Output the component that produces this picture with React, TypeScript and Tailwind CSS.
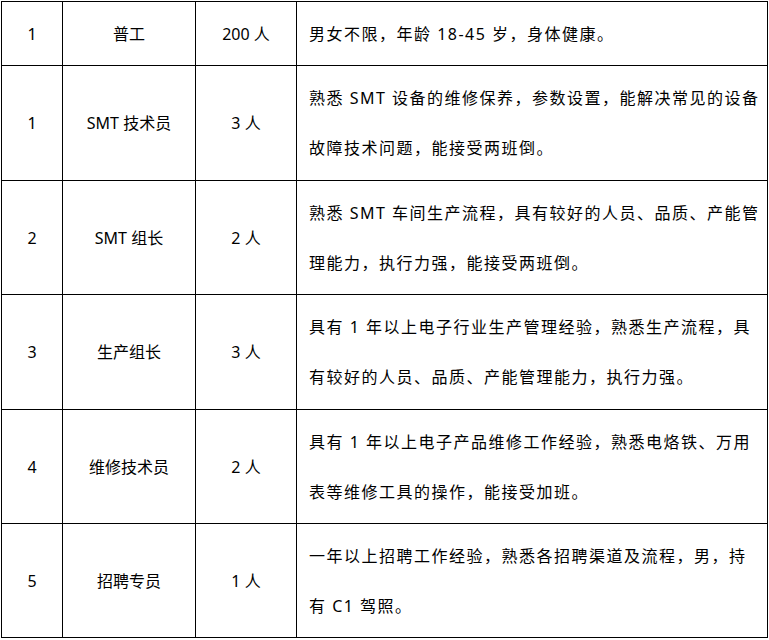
const rows = [
  { no: "1", title: "普工", count: "200 人", lines: ["男女不限，年龄 18-45 岁，身体健康。"], h: "h-[64px]" },
  {
    no: "1",
    title: "SMT 技术员",
    count: "3 人",
    lines: ["熟悉 SMT 设备的维修保养，参数设置，能解决常见的设备", "故障技术问题，能接受两班倒。"],
    h: "h-[115px]",
  },
  {
    no: "2",
    title: "SMT 组长",
    count: "2 人",
    lines: ["熟悉 SMT 车间生产流程，具有较好的人员、品质、产能管", "理能力，执行力强，能接受两班倒。"],
    h: "h-[114px]",
  },
  {
    no: "3",
    title: "生产组长",
    count: "3 人",
    lines: ["具有 1 年以上电子行业生产管理经验，熟悉生产流程，具", "有较好的人员、品质、产能管理能力，执行力强。"],
    h: "h-[115px]",
  },
  {
    no: "4",
    title: "维修技术员",
    count: "2 人",
    lines: ["具有 1 年以上电子产品维修工作经验，熟悉电烙铁、万用", "表等维修工具的操作，能接受加班。"],
    h: "h-[114px]",
  },
  {
    no: "5",
    title: "招聘专员",
    count: "1 人",
    lines: ["一年以上招聘工作经验，熟悉各招聘渠道及流程，男，持", "有 C1 驾照。"],
    h: "h-[114px]",
  },
];

export default function App() {
  return (
    <div
      className="bg-white min-h-[640px] pl-px pt-px text-black text-[16px]"
      style={{ fontFamily: '"Noto Sans", "Noto Sans CJK SC", sans-serif' }}
    >
      <table className="border-collapse table-fixed w-[766px]">
        <colgroup>
          <col className="w-[61px]" />
          <col className="w-[133px]" />
          <col className="w-[101px]" />
          <col className="w-[471px]" />
        </colgroup>
        <tbody>
          {rows.map((r, i) => (
            <tr key={i} className={r.h}>
              <td className="border border-black text-center align-middle">{r.no}</td>
              <td className="border border-black text-center align-middle">{r.title}</td>
              <td className="border border-black text-center align-middle">{r.count}</td>
              <td className="border border-black align-middle pl-[12px] pr-2 tracking-[1.5px]">
                {r.lines.map((l, j) => (
                  <div key={j} className="whitespace-nowrap leading-[50px]">
                    {l}
                  </div>
                ))}
              </td>
            </tr>
          ))}
        </tbody>
      </table>
    </div>
  );
}
